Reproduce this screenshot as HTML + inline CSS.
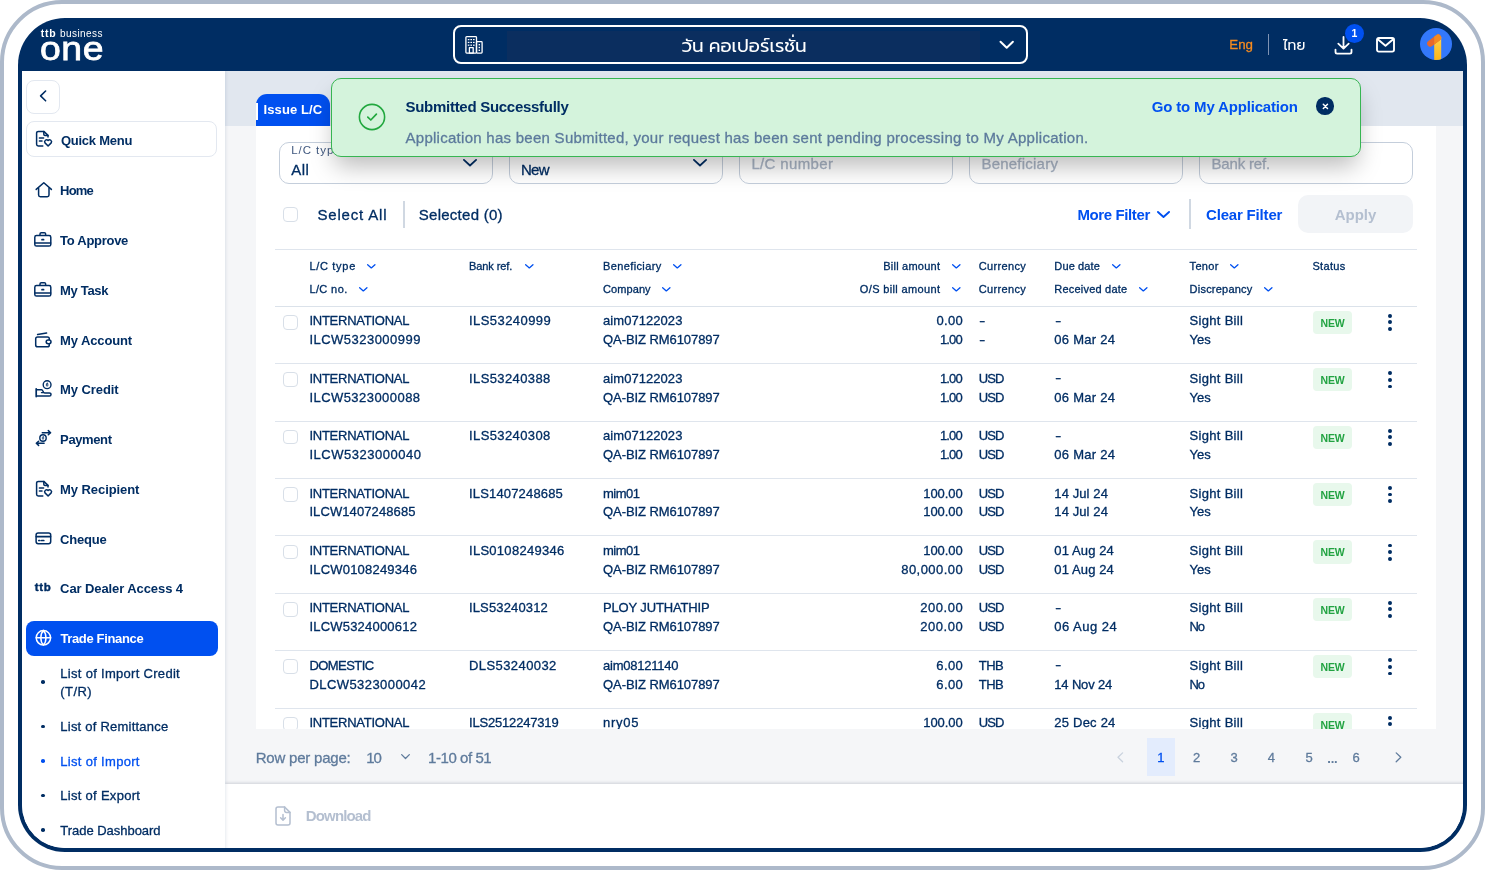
<!DOCTYPE html>
<html lang="en">
<head>
<meta charset="utf-8">
<title>ttb business one - List of Import</title>
<style>
*{box-sizing:border-box;margin:0;padding:0}
html,body{width:1485px;height:870px;overflow:hidden;background:#fff}
body{position:relative;font-family:"Liberation Sans","Noto Sans CJK SC",sans-serif;color:#002d63;-webkit-font-smoothing:antialiased}
.abs{position:absolute}
.outer{position:absolute;left:0;top:0;width:1484.5px;height:869.5px;border:4px solid #adb9ca;border-left-width:4.8px;border-radius:62px}
.frame{position:absolute;left:18px;top:18px;width:1449px;height:834px;background:#002d63;border-radius:47px;overflow:hidden;will-change:transform}
.clip{position:absolute;left:4px;top:53.4px;width:1441px;height:776.6px;background:#f5f6f8;border-radius:0 0 43px 43px;overflow:hidden}
/* page coordinate system inside .clip */
.pg{position:absolute;left:-22px;top:-71.4px;width:1485px;height:870px}
.hd{position:absolute;left:-18px;top:-18px;width:1485px;height:870px;pointer-events:none}
.t{position:absolute;white-space:nowrap;line-height:1}
svg{position:absolute;overflow:visible}
.thai{font-family:"Liberation Sans","Prompt","Kanit","IBM Plex Sans Thai","Noto Sans Thai","Loma","Noto Sans CJK SC",sans-serif}
.rc,.hc,.md{-webkit-text-stroke:0.3px currentColor}
/*SECTION-CSS*/
</style>
</head>
<body>
<div class="outer"></div>
<div class="frame">
  <div class="hd">
<!--HEADER-->
    <!-- logo -->
    <div class="t" style="letter-spacing:0.75px;left:40.7px;top:28.1px;font-size:10.5px;font-weight:700;color:#fff">ttb</div>
    <div class="t" style="letter-spacing:0.42px;left:60.0px;top:28.5px;font-size:10px;color:#fff">business</div>
    <div class="t logo1" style="letter-spacing:0.50px;left:40.0px;top:30.7px;font-size:34px;color:#fff;-webkit-text-stroke:0.8px #fff;transform:scaleX(1.1);transform-origin:0 0">one</div>
    <!-- company selector -->
    <div class="abs" style="left:453px;top:25px;width:575px;height:39px;border:2px solid #fff;border-radius:8px"></div>
    <div class="abs" style="left:507px;top:31px;width:473px;height:30px;background:#0b2e5f"></div>
    <svg style="left:465px;top:36px" width="18" height="18" viewBox="0 0 18 18" fill="none" stroke="#fff" stroke-width="1.3" stroke-linejoin="round">
      <rect x="0.9" y="0.7" width="10.6" height="16.4" rx="0.8"/>
      <rect x="11.5" y="5.6" width="5.6" height="11.5" rx="0.8"/>
      <rect x="4.4" y="11.6" width="3.8" height="5.5"/>
      <g stroke="none" fill="#fff"><rect x="2.8" y="3" width="1.6" height="1.2"/><rect x="5.4" y="3" width="1.6" height="1.2"/><rect x="8" y="3" width="1.6" height="1.2"/>
      <rect x="2.8" y="5.8" width="1.6" height="1.2"/><rect x="5.4" y="5.8" width="1.6" height="1.2"/><rect x="8" y="5.8" width="1.6" height="1.2"/>
      <rect x="2.8" y="8.6" width="1.6" height="1.2"/><rect x="5.4" y="8.6" width="1.6" height="1.2"/><rect x="8" y="8.6" width="1.6" height="1.2"/>
      <rect x="13.6" y="8" width="1.4" height="1.4"/><rect x="13.6" y="10.8" width="1.4" height="1.4"/><rect x="13.6" y="13.6" width="1.4" height="1.4"/></g>
    </svg>
    <div class="t thai" style="left:644px;top:35px;width:200px;text-align:center;font-size:18.4px;line-height:22px;color:#fff">วัน คอเปอร์เรชั่น</div>
    <svg style="left:999px;top:40px" width="16" height="10" viewBox="0 0 16 10" fill="none" stroke="#fff" stroke-width="2" stroke-linecap="round" stroke-linejoin="round"><path d="M1.5 1.8 L7.7 7.8 L13.9 1.8"/></svg>
    <!-- language -->
    <div class="t md" style="left:1229.3px;top:38px;font-size:13.3px;color:#f68b1f">Eng</div>
    <div class="abs" style="left:1267.5px;top:34px;width:1.5px;height:21px;background:#7f93b3"></div>
    <div class="t thai" style="left:1283px;top:35px;font-size:14px;line-height:20px;color:#fff">ไทย</div>
    <!-- download -->
    <svg style="left:1334px;top:36px" width="19" height="19" viewBox="0 0 19 19" fill="none" stroke="#fff" stroke-width="1.8" stroke-linecap="round" stroke-linejoin="round"><path d="M9.5 1 V12.2 M4.3 7.6 L9.5 12.6 L14.7 7.6 M1.5 13.6 V16 a1.6 1.6 0 0 0 1.6 1.6 H15.9 a1.6 1.6 0 0 0 1.6 -1.6 V13.6"/></svg>
    <div class="abs" style="left:1345px;top:24px;width:19px;height:19px;border-radius:50%;background:#0050f0"></div>
    <div class="t" style="left:1345px;top:28.3px;width:19px;text-align:center;font-size:10.5px;font-weight:700;color:#fff">1</div>
    <!-- mail -->
    <svg style="left:1376.2px;top:37px" width="20" height="16" viewBox="0 0 20 16" fill="none" stroke="#fff" stroke-width="1.9" stroke-linecap="round" stroke-linejoin="round"><rect x="1" y="1" width="17" height="13.6" rx="1.8"/><path d="M1.8 2.2 L9.5 8.8 L17.2 2.2"/></svg>
    <!-- avatar -->
    <svg style="left:1419.9px;top:28.3px" width="32" height="32" viewBox="0 0 32 32">
      <defs><linearGradient id="ag" x1="0" y1="0" x2="0" y2="1"><stop offset="0" stop-color="#ffd24f"/><stop offset="1" stop-color="#fdb515"/></linearGradient><clipPath id="ac"><circle cx="16" cy="16" r="16"/></clipPath><clipPath id="ar"><rect x="14.2" y="0" width="20" height="32"/></clipPath></defs>
      <circle cx="16" cy="16" r="16" fill="#3378fb"/>
      <g clip-path="url(#ac)"><rect x="14.2" y="9" width="7" height="24" fill="url(#ag)"/>
      <path d="M10.3 15.6 L18 9.7" stroke="#e8682c" stroke-width="6.3" stroke-linecap="round"/>
      <g clip-path="url(#ar)"><path d="M10.3 15.6 L18 9.7" stroke="#f58a22" stroke-width="6.3" stroke-linecap="round"/></g></g>
    </svg>
<!--/HEADER-->
  </div>
  <div class="clip"><div class="pg">
<!--MAIN-->
<div class="abs" style="left:225px;top:71px;width:1240px;height:54.8px;background:#e1e7ef"></div>
<div class="abs" style="left:256px;top:125.8px;width:1180.4px;height:603.2px;background:#fff"></div>
<div class="abs" style="left:255.8px;top:93.7px;width:74.7px;height:32.3px;background:#0050f0;border-radius:11px 11px 0 0"></div>
<div class="abs" style="left:256px;top:103px;width:1.8px;height:17px;background:#fff"></div>
<div class="t" style="letter-spacing:0.08px;left:263.6px;top:103.0px;font-size:13px;font-weight:700;color:#fff">Issue L/C</div>
<div class="abs" style="left:279px;top:141.6px;width:214px;height:42px;border:1px solid #c4cedb;border-radius:10px;background:#fff"></div>
<div class="abs" style="left:509px;top:141.6px;width:214px;height:42px;border:1px solid #c4cedb;border-radius:10px;background:#fff"></div>
<div class="abs" style="left:739px;top:141.6px;width:214px;height:42px;border:1px solid #c4cedb;border-radius:10px;background:#fff"></div>
<div class="abs" style="left:969px;top:141.6px;width:214px;height:42px;border:1px solid #c4cedb;border-radius:10px;background:#fff"></div>
<div class="abs" style="left:1199px;top:141.6px;width:214px;height:42px;border:1px solid #c4cedb;border-radius:10px;background:#fff"></div>
<div class="t" style="letter-spacing:0.95px;left:291.2px;top:145.1px;font-size:11.5px;color:#40587f">L/C type</div>
<div class="t md" style="letter-spacing:0.41px;left:291.3px;top:162.0px;font-size:15px;color:#002d63">All</div>
<div class="t" style="letter-spacing:0.68px;left:521.2px;top:145.1px;font-size:11.5px;color:#40587f">Status</div>
<div class="t md" style="letter-spacing:-0.75px;left:521.0px;top:162.0px;font-size:15px;color:#002d63">New</div>
<div class="t md" style="letter-spacing:0.36px;left:751.4px;top:155.9px;font-size:15px;color:#aab5c6">L/C number</div>
<div class="t md" style="letter-spacing:0.23px;left:981.4px;top:155.9px;font-size:15px;color:#aab5c6">Beneficiary</div>
<div class="t md" style="letter-spacing:-0.15px;left:1211.4px;top:155.9px;font-size:15px;color:#aab5c6">Bank ref.</div>
<svg style="left:462.6px;top:159.0px" width="14.0" height="7.4" viewBox="0 0 14.0 7.4" fill="none" stroke="#002d63" stroke-width="1.8" stroke-linecap="round" stroke-linejoin="round"><path d="M0.90 0.90 L7.00 6.50 L13.10 0.90"/></svg>
<svg style="left:692.6px;top:159.0px" width="14.0" height="7.4" viewBox="0 0 14.0 7.4" fill="none" stroke="#002d63" stroke-width="1.8" stroke-linecap="round" stroke-linejoin="round"><path d="M0.90 0.90 L7.00 6.50 L13.10 0.90"/></svg>
<div class="abs" style="left:282.7px;top:207.3px;width:15px;height:14.5px;border:1.5px solid #d8dfe8;border-radius:4px;background:#fff"></div>
<div class="t md" style="letter-spacing:0.82px;left:317.4px;top:206.5px;font-size:15px;color:#002d63">Select All</div>
<div class="abs" style="left:403px;top:201px;width:1.5px;height:27px;background:#d0d8e2"></div>
<div class="t md" style="letter-spacing:0.26px;left:418.8px;top:206.5px;font-size:15px;color:#002d63">Selected (0)</div>
<div class="t" style="letter-spacing:-0.38px;left:1077.4px;top:207.1px;font-size:15px;font-weight:700;color:#0050f0">More Filter</div>
<svg style="left:1157.0px;top:211.0px" width="13.0" height="6.9" viewBox="0 0 13.0 6.9" fill="none" stroke="#0050f0" stroke-width="1.9" stroke-linecap="round" stroke-linejoin="round"><path d="M0.95 0.95 L6.50 5.95 L12.05 0.95"/></svg>
<div class="abs" style="left:1189.2px;top:199px;width:1.5px;height:30px;background:#d0d8e2"></div>
<div class="t" style="letter-spacing:-0.18px;left:1206.0px;top:207.1px;font-size:15px;font-weight:700;color:#0050f0">Clear Filter</div>
<div class="abs" style="left:1298.3px;top:195.1px;width:115px;height:38px;border-radius:10px;background:#f2f4f7"></div>
<div class="t" style="letter-spacing:-0.04px;left:1334.8px;top:207.1px;font-size:15px;font-weight:700;color:#b4bfd0">Apply</div>
<div class="abs" style="left:275px;top:248.7px;width:1142px;height:1px;background:#dfe5ed"></div>
<div class="abs" style="left:275px;top:305.8px;width:1142px;height:1px;background:#dbe2ea"></div>
<div class="t hc" style="letter-spacing:0.70px;left:309.4px;top:260.8px;font-size:11px;color:#002d63">L/C type</div>
<svg style="left:366.5px;top:263.6px" width="8.6" height="4.6" viewBox="0 0 8.6 4.6" fill="none" stroke="#0050f0" stroke-width="1.3" stroke-linecap="round" stroke-linejoin="round"><path d="M0.65 0.65 L4.30 3.95 L7.95 0.65"/></svg>
<div class="t hc" style="letter-spacing:0.39px;left:309.4px;top:283.7px;font-size:11px;color:#002d63">L/C no.</div>
<svg style="left:358.9px;top:286.5px" width="8.6" height="4.6" viewBox="0 0 8.6 4.6" fill="none" stroke="#0050f0" stroke-width="1.3" stroke-linecap="round" stroke-linejoin="round"><path d="M0.65 0.65 L4.30 3.95 L7.95 0.65"/></svg>
<div class="t hc" style="letter-spacing:-0.08px;left:469.0px;top:260.8px;font-size:11px;color:#002d63">Bank ref.</div>
<svg style="left:524.5px;top:263.6px" width="8.6" height="4.6" viewBox="0 0 8.6 4.6" fill="none" stroke="#0050f0" stroke-width="1.3" stroke-linecap="round" stroke-linejoin="round"><path d="M0.65 0.65 L4.30 3.95 L7.95 0.65"/></svg>
<div class="t hc" style="letter-spacing:0.38px;left:603.0px;top:260.8px;font-size:11px;color:#002d63">Beneficiary</div>
<svg style="left:673.3px;top:263.6px" width="8.6" height="4.6" viewBox="0 0 8.6 4.6" fill="none" stroke="#0050f0" stroke-width="1.3" stroke-linecap="round" stroke-linejoin="round"><path d="M0.65 0.65 L4.30 3.95 L7.95 0.65"/></svg>
<div class="t hc" style="letter-spacing:0.09px;left:603.0px;top:283.7px;font-size:11px;color:#002d63">Company</div>
<svg style="left:662.2px;top:286.5px" width="8.6" height="4.6" viewBox="0 0 8.6 4.6" fill="none" stroke="#0050f0" stroke-width="1.3" stroke-linecap="round" stroke-linejoin="round"><path d="M0.65 0.65 L4.30 3.95 L7.95 0.65"/></svg>
<div class="t hc" style="letter-spacing:0.23px;right:544.8px;top:260.8px;font-size:11px;color:#002d63">Bill amount</div>
<svg style="left:951.8px;top:263.6px" width="8.6" height="4.6" viewBox="0 0 8.6 4.6" fill="none" stroke="#0050f0" stroke-width="1.3" stroke-linecap="round" stroke-linejoin="round"><path d="M0.65 0.65 L4.30 3.95 L7.95 0.65"/></svg>
<div class="t hc" style="letter-spacing:0.36px;right:544.6px;top:283.7px;font-size:11px;color:#002d63">O/S bill amount</div>
<svg style="left:951.8px;top:286.5px" width="8.6" height="4.6" viewBox="0 0 8.6 4.6" fill="none" stroke="#0050f0" stroke-width="1.3" stroke-linecap="round" stroke-linejoin="round"><path d="M0.65 0.65 L4.30 3.95 L7.95 0.65"/></svg>
<div class="t hc" style="letter-spacing:0.34px;left:978.8px;top:260.8px;font-size:11px;color:#002d63">Currency</div>
<div class="t hc" style="letter-spacing:0.34px;left:978.8px;top:283.7px;font-size:11px;color:#002d63">Currency</div>
<div class="t hc" style="letter-spacing:0.14px;left:1054.3px;top:260.8px;font-size:11px;color:#002d63">Due date</div>
<svg style="left:1112.2px;top:263.6px" width="8.6" height="4.6" viewBox="0 0 8.6 4.6" fill="none" stroke="#0050f0" stroke-width="1.3" stroke-linecap="round" stroke-linejoin="round"><path d="M0.65 0.65 L4.30 3.95 L7.95 0.65"/></svg>
<div class="t hc" style="letter-spacing:0.21px;left:1054.3px;top:283.7px;font-size:11px;color:#002d63">Received date</div>
<svg style="left:1138.6px;top:286.5px" width="8.6" height="4.6" viewBox="0 0 8.6 4.6" fill="none" stroke="#0050f0" stroke-width="1.3" stroke-linecap="round" stroke-linejoin="round"><path d="M0.65 0.65 L4.30 3.95 L7.95 0.65"/></svg>
<div class="t hc" style="letter-spacing:0.30px;left:1189.6px;top:260.8px;font-size:11px;color:#002d63">Tenor</div>
<svg style="left:1229.6px;top:263.6px" width="8.6" height="4.6" viewBox="0 0 8.6 4.6" fill="none" stroke="#0050f0" stroke-width="1.3" stroke-linecap="round" stroke-linejoin="round"><path d="M0.65 0.65 L4.30 3.95 L7.95 0.65"/></svg>
<div class="t hc" style="letter-spacing:0.22px;left:1189.6px;top:283.7px;font-size:11px;color:#002d63">Discrepancy</div>
<svg style="left:1264.2px;top:286.5px" width="8.6" height="4.6" viewBox="0 0 8.6 4.6" fill="none" stroke="#0050f0" stroke-width="1.3" stroke-linecap="round" stroke-linejoin="round"><path d="M0.65 0.65 L4.30 3.95 L7.95 0.65"/></svg>
<div class="t hc" style="letter-spacing:0.34px;left:1312.4px;top:260.8px;font-size:11px;color:#002d63">Status</div>
<div class="abs" style="left:282.7px;top:315.0px;width:15px;height:14.5px;border:1.5px solid #d8dfe8;border-radius:4px;background:#fff"></div>
<div class="t rc" style="letter-spacing:-0.25px;left:309.4px;top:314.3px;font-size:13px">INTERNATIONAL</div>
<div class="t rc" style="letter-spacing:0.48px;left:309.4px;top:333.1px;font-size:13px">ILCW5323000999</div>
<div class="t rc" style="letter-spacing:0.44px;left:469.0px;top:314.3px;font-size:13px">ILS53240999</div>
<div class="t rc" style="letter-spacing:0.06px;left:603.0px;top:314.3px;font-size:13px">aim07122023</div>
<div class="t rc" style="letter-spacing:-0.07px;left:603.0px;top:333.1px;font-size:13px">QA-BIZ RM6107897</div>
<div class="t rc" style="letter-spacing:0.33px;right:522.0px;top:314.3px;font-size:13px">0.00</div>
<div class="t rc" style="letter-spacing:-0.87px;right:523.2px;top:333.1px;font-size:13px">1.00</div>
<div class="t rc" style="left:979.0px;top:313.9px;font-size:13px;transform:scaleX(1.5);transform-origin:0 50%;-webkit-text-stroke:0.1px currentColor">-</div>
<div class="t rc" style="left:979.0px;top:332.7px;font-size:13px;transform:scaleX(1.5);transform-origin:0 50%;-webkit-text-stroke:0.1px currentColor">-</div>
<div class="t rc" style="left:1054.5px;top:313.9px;font-size:13px;transform:scaleX(1.5);transform-origin:0 50%;-webkit-text-stroke:0.1px currentColor">-</div>
<div class="t rc" style="letter-spacing:0.27px;left:1054.3px;top:333.1px;font-size:13px">06 Mar 24</div>
<div class="t rc" style="letter-spacing:0.30px;left:1189.6px;top:314.3px;font-size:13px">Sight Bill</div>
<div class="t rc" style="letter-spacing:-0.05px;left:1189.6px;top:333.1px;font-size:13px">Yes</div>
<div class="abs" style="left:1313px;top:310.8px;width:39.2px;height:23.2px;border-radius:4px;background:#e8f8ec"></div>
<div class="t nw" style="letter-spacing:-0.10px;left:1182.6px;width:300px;text-align:center;top:317.8px;font-size:10.5px;font-weight:700;color:#22a342">NEW</div>
<div class="abs" style="left:1388.3px;top:313.9px;width:3.9px;height:3.9px;border-radius:50%;background:#002d63"></div>
<div class="abs" style="left:1388.3px;top:320.4px;width:3.9px;height:3.9px;border-radius:50%;background:#002d63"></div>
<div class="abs" style="left:1388.3px;top:327.1px;width:3.9px;height:3.9px;border-radius:50%;background:#002d63"></div>
<div class="abs" style="left:275px;top:363.2px;width:1142px;height:1px;background:#dfe5ed"></div>
<div class="abs" style="left:282.7px;top:372.4px;width:15px;height:14.5px;border:1.5px solid #d8dfe8;border-radius:4px;background:#fff"></div>
<div class="t rc" style="letter-spacing:-0.25px;left:309.4px;top:371.7px;font-size:13px">INTERNATIONAL</div>
<div class="t rc" style="letter-spacing:0.45px;left:309.4px;top:390.5px;font-size:13px">ILCW5323000088</div>
<div class="t rc" style="letter-spacing:0.40px;left:469.0px;top:371.7px;font-size:13px">ILS53240388</div>
<div class="t rc" style="letter-spacing:0.06px;left:603.0px;top:371.7px;font-size:13px">aim07122023</div>
<div class="t rc" style="letter-spacing:-0.07px;left:603.0px;top:390.5px;font-size:13px">QA-BIZ RM6107897</div>
<div class="t rc" style="letter-spacing:-0.87px;right:523.2px;top:371.7px;font-size:13px">1.00</div>
<div class="t rc" style="letter-spacing:-0.87px;right:523.2px;top:390.5px;font-size:13px">1.00</div>
<div class="t rc" style="letter-spacing:-0.97px;left:978.8px;top:371.7px;font-size:13px">USD</div>
<div class="t rc" style="letter-spacing:-0.97px;left:978.8px;top:390.5px;font-size:13px">USD</div>
<div class="t rc" style="left:1054.5px;top:371.3px;font-size:13px;transform:scaleX(1.5);transform-origin:0 50%;-webkit-text-stroke:0.1px currentColor">-</div>
<div class="t rc" style="letter-spacing:0.27px;left:1054.3px;top:390.5px;font-size:13px">06 Mar 24</div>
<div class="t rc" style="letter-spacing:0.30px;left:1189.6px;top:371.7px;font-size:13px">Sight Bill</div>
<div class="t rc" style="letter-spacing:-0.05px;left:1189.6px;top:390.5px;font-size:13px">Yes</div>
<div class="abs" style="left:1313px;top:368.2px;width:39.2px;height:23.2px;border-radius:4px;background:#e8f8ec"></div>
<div class="t nw" style="letter-spacing:-0.10px;left:1182.6px;width:300px;text-align:center;top:375.2px;font-size:10.5px;font-weight:700;color:#22a342">NEW</div>
<div class="abs" style="left:1388.3px;top:371.3px;width:3.9px;height:3.9px;border-radius:50%;background:#002d63"></div>
<div class="abs" style="left:1388.3px;top:377.8px;width:3.9px;height:3.9px;border-radius:50%;background:#002d63"></div>
<div class="abs" style="left:1388.3px;top:384.5px;width:3.9px;height:3.9px;border-radius:50%;background:#002d63"></div>
<div class="abs" style="left:275px;top:420.6px;width:1142px;height:1px;background:#dfe5ed"></div>
<div class="abs" style="left:282.7px;top:429.8px;width:15px;height:14.5px;border:1.5px solid #d8dfe8;border-radius:4px;background:#fff"></div>
<div class="t rc" style="letter-spacing:-0.25px;left:309.4px;top:429.1px;font-size:13px">INTERNATIONAL</div>
<div class="t rc" style="letter-spacing:0.53px;left:309.4px;top:447.9px;font-size:13px">ILCW5323000040</div>
<div class="t rc" style="letter-spacing:0.40px;left:469.0px;top:429.1px;font-size:13px">ILS53240308</div>
<div class="t rc" style="letter-spacing:0.06px;left:603.0px;top:429.1px;font-size:13px">aim07122023</div>
<div class="t rc" style="letter-spacing:-0.07px;left:603.0px;top:447.9px;font-size:13px">QA-BIZ RM6107897</div>
<div class="t rc" style="letter-spacing:-0.87px;right:523.2px;top:429.1px;font-size:13px">1.00</div>
<div class="t rc" style="letter-spacing:-0.87px;right:523.2px;top:447.9px;font-size:13px">1.00</div>
<div class="t rc" style="letter-spacing:-0.97px;left:978.8px;top:429.1px;font-size:13px">USD</div>
<div class="t rc" style="letter-spacing:-0.97px;left:978.8px;top:447.9px;font-size:13px">USD</div>
<div class="t rc" style="left:1054.5px;top:428.7px;font-size:13px;transform:scaleX(1.5);transform-origin:0 50%;-webkit-text-stroke:0.1px currentColor">-</div>
<div class="t rc" style="letter-spacing:0.27px;left:1054.3px;top:447.9px;font-size:13px">06 Mar 24</div>
<div class="t rc" style="letter-spacing:0.30px;left:1189.6px;top:429.1px;font-size:13px">Sight Bill</div>
<div class="t rc" style="letter-spacing:-0.05px;left:1189.6px;top:447.9px;font-size:13px">Yes</div>
<div class="abs" style="left:1313px;top:425.6px;width:39.2px;height:23.2px;border-radius:4px;background:#e8f8ec"></div>
<div class="t nw" style="letter-spacing:-0.10px;left:1182.6px;width:300px;text-align:center;top:432.6px;font-size:10.5px;font-weight:700;color:#22a342">NEW</div>
<div class="abs" style="left:1388.3px;top:428.8px;width:3.9px;height:3.9px;border-radius:50%;background:#002d63"></div>
<div class="abs" style="left:1388.3px;top:435.2px;width:3.9px;height:3.9px;border-radius:50%;background:#002d63"></div>
<div class="abs" style="left:1388.3px;top:441.9px;width:3.9px;height:3.9px;border-radius:50%;background:#002d63"></div>
<div class="abs" style="left:275px;top:478.0px;width:1142px;height:1px;background:#dfe5ed"></div>
<div class="abs" style="left:282.7px;top:487.2px;width:15px;height:14.5px;border:1.5px solid #d8dfe8;border-radius:4px;background:#fff"></div>
<div class="t rc" style="letter-spacing:-0.25px;left:309.4px;top:486.5px;font-size:13px">INTERNATIONAL</div>
<div class="t rc" style="letter-spacing:0.10px;left:309.4px;top:505.3px;font-size:13px">ILCW1407248685</div>
<div class="t rc" style="letter-spacing:0.17px;left:469.0px;top:486.5px;font-size:13px">ILS1407248685</div>
<div class="t rc" style="letter-spacing:-0.50px;left:603.0px;top:486.5px;font-size:13px">mim01</div>
<div class="t rc" style="letter-spacing:-0.07px;left:603.0px;top:505.3px;font-size:13px">QA-BIZ RM6107897</div>
<div class="t rc" style="letter-spacing:-0.07px;right:522.4px;top:486.5px;font-size:13px">100.00</div>
<div class="t rc" style="letter-spacing:-0.07px;right:522.4px;top:505.3px;font-size:13px">100.00</div>
<div class="t rc" style="letter-spacing:-0.97px;left:978.8px;top:486.5px;font-size:13px">USD</div>
<div class="t rc" style="letter-spacing:-0.97px;left:978.8px;top:505.3px;font-size:13px">USD</div>
<div class="t rc" style="letter-spacing:0.10px;left:1054.3px;top:486.5px;font-size:13px">14 Jul 24</div>
<div class="t rc" style="letter-spacing:0.10px;left:1054.3px;top:505.3px;font-size:13px">14 Jul 24</div>
<div class="t rc" style="letter-spacing:0.30px;left:1189.6px;top:486.5px;font-size:13px">Sight Bill</div>
<div class="t rc" style="letter-spacing:-0.05px;left:1189.6px;top:505.3px;font-size:13px">Yes</div>
<div class="abs" style="left:1313px;top:483.0px;width:39.2px;height:23.2px;border-radius:4px;background:#e8f8ec"></div>
<div class="t nw" style="letter-spacing:-0.10px;left:1182.6px;width:300px;text-align:center;top:490.0px;font-size:10.5px;font-weight:700;color:#22a342">NEW</div>
<div class="abs" style="left:1388.3px;top:486.1px;width:3.9px;height:3.9px;border-radius:50%;background:#002d63"></div>
<div class="abs" style="left:1388.3px;top:492.6px;width:3.9px;height:3.9px;border-radius:50%;background:#002d63"></div>
<div class="abs" style="left:1388.3px;top:499.3px;width:3.9px;height:3.9px;border-radius:50%;background:#002d63"></div>
<div class="abs" style="left:275px;top:535.4px;width:1142px;height:1px;background:#dfe5ed"></div>
<div class="abs" style="left:282.7px;top:544.6px;width:15px;height:14.5px;border:1.5px solid #d8dfe8;border-radius:4px;background:#fff"></div>
<div class="t rc" style="letter-spacing:-0.25px;left:309.4px;top:543.9px;font-size:13px">INTERNATIONAL</div>
<div class="t rc" style="letter-spacing:0.21px;left:309.4px;top:562.7px;font-size:13px">ILCW0108249346</div>
<div class="t rc" style="letter-spacing:0.28px;left:469.0px;top:543.9px;font-size:13px">ILS0108249346</div>
<div class="t rc" style="letter-spacing:-0.50px;left:603.0px;top:543.9px;font-size:13px">mim01</div>
<div class="t rc" style="letter-spacing:-0.07px;left:603.0px;top:562.7px;font-size:13px">QA-BIZ RM6107897</div>
<div class="t rc" style="letter-spacing:-0.07px;right:522.4px;top:543.9px;font-size:13px">100.00</div>
<div class="t rc" style="letter-spacing:0.46px;right:521.8px;top:562.7px;font-size:13px">80,000.00</div>
<div class="t rc" style="letter-spacing:-0.97px;left:978.8px;top:543.9px;font-size:13px">USD</div>
<div class="t rc" style="letter-spacing:-0.97px;left:978.8px;top:562.7px;font-size:13px">USD</div>
<div class="t rc" style="letter-spacing:0.12px;left:1054.3px;top:543.9px;font-size:13px">01 Aug 24</div>
<div class="t rc" style="letter-spacing:0.12px;left:1054.3px;top:562.7px;font-size:13px">01 Aug 24</div>
<div class="t rc" style="letter-spacing:0.30px;left:1189.6px;top:543.9px;font-size:13px">Sight Bill</div>
<div class="t rc" style="letter-spacing:-0.05px;left:1189.6px;top:562.7px;font-size:13px">Yes</div>
<div class="abs" style="left:1313px;top:540.4px;width:39.2px;height:23.2px;border-radius:4px;background:#e8f8ec"></div>
<div class="t nw" style="letter-spacing:-0.10px;left:1182.6px;width:300px;text-align:center;top:547.4px;font-size:10.5px;font-weight:700;color:#22a342">NEW</div>
<div class="abs" style="left:1388.3px;top:543.5px;width:3.9px;height:3.9px;border-radius:50%;background:#002d63"></div>
<div class="abs" style="left:1388.3px;top:550.0px;width:3.9px;height:3.9px;border-radius:50%;background:#002d63"></div>
<div class="abs" style="left:1388.3px;top:556.8px;width:3.9px;height:3.9px;border-radius:50%;background:#002d63"></div>
<div class="abs" style="left:275px;top:592.8px;width:1142px;height:1px;background:#dfe5ed"></div>
<div class="abs" style="left:282.7px;top:602.0px;width:15px;height:14.5px;border:1.5px solid #d8dfe8;border-radius:4px;background:#fff"></div>
<div class="t rc" style="letter-spacing:-0.25px;left:309.4px;top:601.3px;font-size:13px">INTERNATIONAL</div>
<div class="t rc" style="letter-spacing:0.21px;left:309.4px;top:620.1px;font-size:13px">ILCW5324000612</div>
<div class="t rc" style="letter-spacing:0.14px;left:469.0px;top:601.3px;font-size:13px">ILS53240312</div>
<div class="t rc" style="letter-spacing:-0.15px;left:603.0px;top:601.3px;font-size:13px">PLOY JUTHATHIP</div>
<div class="t rc" style="letter-spacing:-0.07px;left:603.0px;top:620.1px;font-size:13px">QA-BIZ RM6107897</div>
<div class="t rc" style="letter-spacing:0.53px;right:521.8px;top:601.3px;font-size:13px">200.00</div>
<div class="t rc" style="letter-spacing:0.53px;right:521.8px;top:620.1px;font-size:13px">200.00</div>
<div class="t rc" style="letter-spacing:-0.97px;left:978.8px;top:601.3px;font-size:13px">USD</div>
<div class="t rc" style="letter-spacing:-0.97px;left:978.8px;top:620.1px;font-size:13px">USD</div>
<div class="t rc" style="left:1054.5px;top:600.9px;font-size:13px;transform:scaleX(1.5);transform-origin:0 50%;-webkit-text-stroke:0.1px currentColor">-</div>
<div class="t rc" style="letter-spacing:0.48px;left:1054.3px;top:620.1px;font-size:13px">06 Aug 24</div>
<div class="t rc" style="letter-spacing:0.30px;left:1189.6px;top:601.3px;font-size:13px">Sight Bill</div>
<div class="t rc" style="letter-spacing:-1.12px;left:1189.6px;top:620.1px;font-size:13px">No</div>
<div class="abs" style="left:1313px;top:597.8px;width:39.2px;height:23.2px;border-radius:4px;background:#e8f8ec"></div>
<div class="t nw" style="letter-spacing:-0.10px;left:1182.6px;width:300px;text-align:center;top:604.8px;font-size:10.5px;font-weight:700;color:#22a342">NEW</div>
<div class="abs" style="left:1388.3px;top:600.9px;width:3.9px;height:3.9px;border-radius:50%;background:#002d63"></div>
<div class="abs" style="left:1388.3px;top:607.4px;width:3.9px;height:3.9px;border-radius:50%;background:#002d63"></div>
<div class="abs" style="left:1388.3px;top:614.1px;width:3.9px;height:3.9px;border-radius:50%;background:#002d63"></div>
<div class="abs" style="left:275px;top:650.2px;width:1142px;height:1px;background:#dfe5ed"></div>
<div class="abs" style="left:282.7px;top:659.4px;width:15px;height:14.5px;border:1.5px solid #d8dfe8;border-radius:4px;background:#fff"></div>
<div class="t rc" style="letter-spacing:-0.54px;left:309.4px;top:658.7px;font-size:13px">DOMESTIC</div>
<div class="t rc" style="letter-spacing:0.44px;left:309.4px;top:677.5px;font-size:13px">DLCW5323000042</div>
<div class="t rc" style="letter-spacing:0.42px;left:469.0px;top:658.7px;font-size:13px">DLS53240032</div>
<div class="t rc" style="letter-spacing:-0.23px;left:603.0px;top:658.7px;font-size:13px">aim08121140</div>
<div class="t rc" style="letter-spacing:-0.07px;left:603.0px;top:677.5px;font-size:13px">QA-BIZ RM6107897</div>
<div class="t rc" style="letter-spacing:0.37px;right:521.9px;top:658.7px;font-size:13px">6.00</div>
<div class="t rc" style="letter-spacing:0.37px;right:521.9px;top:677.5px;font-size:13px">6.00</div>
<div class="t rc" style="letter-spacing:-0.60px;left:978.8px;top:658.7px;font-size:13px">THB</div>
<div class="t rc" style="letter-spacing:-0.60px;left:978.8px;top:677.5px;font-size:13px">THB</div>
<div class="t rc" style="left:1054.5px;top:658.3px;font-size:13px;transform:scaleX(1.5);transform-origin:0 50%;-webkit-text-stroke:0.1px currentColor">-</div>
<div class="t rc" style="letter-spacing:-0.16px;left:1054.3px;top:677.5px;font-size:13px">14 Nov 24</div>
<div class="t rc" style="letter-spacing:0.30px;left:1189.6px;top:658.7px;font-size:13px">Sight Bill</div>
<div class="t rc" style="letter-spacing:-1.12px;left:1189.6px;top:677.5px;font-size:13px">No</div>
<div class="abs" style="left:1313px;top:655.2px;width:39.2px;height:23.2px;border-radius:4px;background:#e8f8ec"></div>
<div class="t nw" style="letter-spacing:-0.10px;left:1182.6px;width:300px;text-align:center;top:662.2px;font-size:10.5px;font-weight:700;color:#22a342">NEW</div>
<div class="abs" style="left:1388.3px;top:658.3px;width:3.9px;height:3.9px;border-radius:50%;background:#002d63"></div>
<div class="abs" style="left:1388.3px;top:664.8px;width:3.9px;height:3.9px;border-radius:50%;background:#002d63"></div>
<div class="abs" style="left:1388.3px;top:671.5px;width:3.9px;height:3.9px;border-radius:50%;background:#002d63"></div>
<div class="abs" style="left:275px;top:707.6px;width:1142px;height:1px;background:#dfe5ed"></div>
<div class="abs" style="left:282.7px;top:716.8px;width:15px;height:14.5px;border:1.5px solid #d8dfe8;border-radius:4px;background:#fff"></div>
<div class="t rc" style="letter-spacing:-0.25px;left:309.4px;top:716.1px;font-size:13px">INTERNATIONAL</div>
<div class="t rc" style="letter-spacing:-0.18px;left:469.0px;top:716.1px;font-size:13px">ILS2512247319</div>
<div class="t rc" style="letter-spacing:0.75px;left:603.0px;top:716.1px;font-size:13px">nry05</div>
<div class="t rc" style="letter-spacing:-0.07px;right:522.4px;top:716.1px;font-size:13px">100.00</div>
<div class="t rc" style="letter-spacing:-0.97px;left:978.8px;top:716.1px;font-size:13px">USD</div>
<div class="t rc" style="letter-spacing:0.22px;left:1054.3px;top:716.1px;font-size:13px">25 Dec 24</div>
<div class="t rc" style="letter-spacing:0.30px;left:1189.6px;top:716.1px;font-size:13px">Sight Bill</div>
<div class="abs" style="left:1313px;top:712.6px;width:39.2px;height:23.2px;border-radius:4px;background:#e8f8ec"></div>
<div class="t nw" style="letter-spacing:-0.10px;left:1182.6px;width:300px;text-align:center;top:719.6px;font-size:10.5px;font-weight:700;color:#22a342">NEW</div>
<div class="abs" style="left:1388.3px;top:715.8px;width:3.9px;height:3.9px;border-radius:50%;background:#002d63"></div>
<div class="abs" style="left:1388.3px;top:722.2px;width:3.9px;height:3.9px;border-radius:50%;background:#002d63"></div>
<div class="abs" style="left:1388.3px;top:729.0px;width:3.9px;height:3.9px;border-radius:50%;background:#002d63"></div>
<div class="abs" style="left:225px;top:729px;width:1240px;height:55px;background:#f5f6f8"></div>
<div class="t md" style="letter-spacing:-0.21px;left:255.7px;top:750.3px;font-size:15px;color:#5f7b9c">Row per page:</div>
<div class="t md" style="letter-spacing:-1.10px;left:366.2px;top:750.3px;font-size:15px;color:#5f7b9c">10</div>
<svg style="left:400.8px;top:754.4px" width="9.0" height="5.2" viewBox="0 0 9.0 5.2" fill="none" stroke="#5f7b9c" stroke-width="1.3" stroke-linecap="round" stroke-linejoin="round"><path d="M0.65 0.65 L4.50 4.55 L8.35 0.65"/></svg>
<div class="t md" style="letter-spacing:-0.43px;left:428.0px;top:750.3px;font-size:15px;color:#5f7b9c">1-10 of 51</div>
<div class="abs" style="left:1146.8px;top:737.9px;width:28.2px;height:38.2px;background:#e3ecfd"></div>
<div class="t md" style="left:1010.9px;width:300px;text-align:center;top:751.2px;font-size:13px;color:#0050f0">1</div>
<div class="t md" style="left:1046.7px;width:300px;text-align:center;top:751.2px;font-size:13px;color:#5f7b9c">2</div>
<div class="t md" style="left:1084.0px;width:300px;text-align:center;top:751.2px;font-size:13px;color:#5f7b9c">3</div>
<div class="t md" style="left:1121.4px;width:300px;text-align:center;top:751.2px;font-size:13px;color:#5f7b9c">4</div>
<div class="t md" style="left:1159.0px;width:300px;text-align:center;top:751.2px;font-size:13px;color:#5f7b9c">5</div>
<div class="t md" style="left:1206.0px;width:300px;text-align:center;top:751.2px;font-size:13px;color:#5f7b9c">6</div>
<div class="t" style="letter-spacing:-0.30px;left:1182.3px;width:300px;text-align:center;top:752.3px;font-size:13px;font-weight:700;color:#5f7b9c">...</div>
<svg style="left:1116.8px;top:752.3px" width="7" height="11" viewBox="0 0 7 11" fill="none" stroke="#c9d2de" stroke-width="1.3" stroke-linecap="round" stroke-linejoin="round"><path d="M5.6 0.9 L1 5.3 L5.6 9.7"/></svg>
<svg style="left:1394.6px;top:752.3px" width="7" height="11" viewBox="0 0 7 11" fill="none" stroke="#5f7b9c" stroke-width="1.3" stroke-linecap="round" stroke-linejoin="round"><path d="M1.2 0.9 L5.8 5.3 L1.2 9.7"/></svg>
<div class="abs" style="left:225px;top:784px;width:1240px;height:70px;background:#fff;box-shadow:0 -1px 3px rgba(0,20,50,0.17)"></div>
<svg style="left:274.5px;top:805.5px" width="16" height="20" viewBox="0 0 16 20" fill="none" stroke="#b4bfd0" stroke-width="1.5" stroke-linecap="round" stroke-linejoin="round"><path d="M9.6 1 H3 a2 2 0 0 0 -2 2 V17 a2 2 0 0 0 2 2 H13 a2 2 0 0 0 2 -2 V6.4 Z"/><path d="M9.6 1 V4.6 a1.8 1.8 0 0 0 1.8 1.8 H15"/><path d="M8 8.6 V14 M5.6 11.8 L8 14.2 L10.4 11.8"/></svg>
<div class="t" style="letter-spacing:-0.85px;left:305.8px;top:807.9px;font-size:15px;font-weight:700;color:#b4bfd0">Download</div>
<!--/MAIN-->
<!--SIDEBAR-->
<div class="abs" style="left:22px;top:71px;width:203px;height:780px;background:#fff;box-shadow:1px 0 3px rgba(0,45,99,0.10)"></div>
<div class="abs" style="left:26px;top:79.5px;width:34px;height:34px;border:1px solid #e3e8f0;border-radius:8px;background:#fff"></div>
<svg style="left:38px;top:90px" width="9" height="13" viewBox="0 0 9 13" fill="none" stroke="#002d63" stroke-width="1.6" stroke-linecap="round" stroke-linejoin="round"><path d="M7.6 1 L2.6 5.9 L7.6 10.8"/></svg>
<div class="abs" style="left:26px;top:121px;width:191px;height:36.3px;border:1px solid #e3e8f0;border-radius:8px;background:#fff"></div>
<div class="abs" style="left:26px;top:621px;width:191.5px;height:35px;border-radius:8px;background:#0050f0"></div>
<svg style="left:35px;top:130.4px" width="18" height="18" viewBox="0 0 18 18" fill="none" stroke="#002d63" stroke-width="1.5" stroke-linecap="round" stroke-linejoin="round" stroke-width="1.7"><path d="M7.8 16 H3.3 a1.7 1.7 0 0 1 -1.7 -1.7 V3.1 a1.7 1.7 0 0 1 1.7 -1.7 H8.8 L13 5.4 V7"/><path d="M8.8 1.4 V4.2 a1.2 1.2 0 0 0 1.2 1.2 H13"/><path d="M4.4 8 H8.6 M4.4 11 H7"/><path d="M13.1 16 L10 12.9 a2 2 0 0 1 3.1 -2.5 a2 2 0 0 1 3.1 2.5 Z"/></svg>
<div class="t" style="letter-spacing:-0.23px;left:60.9px;top:133.7px;font-size:13px;font-weight:700;color:#002d63">Quick Menu</div>
<svg style="left:34.5px;top:180.5px" width="18" height="18" viewBox="0 0 18 18" fill="none" stroke="#002d63" stroke-width="1.5" stroke-linecap="round" stroke-linejoin="round"><path d="M1.2 8.4 L8.8 1.7 L16.4 8.4"/><path d="M3.6 7.2 V14 a1.7 1.7 0 0 0 1.7 1.7 H12.3 a1.7 1.7 0 0 0 1.7 -1.7 V7.2"/></svg>
<div class="t" style="letter-spacing:-0.84px;left:60.1px;top:183.5px;font-size:13px;font-weight:700;color:#002d63">Home</div>
<svg style="left:34px;top:230.8px" width="19" height="18" viewBox="0 0 19 18" fill="none" stroke="#002d63" stroke-width="1.5" stroke-linecap="round" stroke-linejoin="round"><rect x="0.8" y="4.5" width="16" height="10.6" rx="1.7"/><path d="M6 4.3 V3 a1.3 1.3 0 0 1 1.3 -1.3 H10.3 a1.3 1.3 0 0 1 1.3 1.3 V4.3"/><path d="M1 11.9 H16.6"/><path d="M8 8.7 H9.6" stroke-width="1.7"/></svg>
<div class="t" style="letter-spacing:-0.28px;left:60.1px;top:233.5px;font-size:13px;font-weight:700;color:#002d63">To Approve</div>
<svg style="left:34px;top:281.3px" width="19" height="18" viewBox="0 0 19 18" fill="none" stroke="#002d63" stroke-width="1.5" stroke-linecap="round" stroke-linejoin="round"><rect x="0.8" y="4.5" width="16" height="10.6" rx="1.7"/><path d="M6 4.3 V3 a1.3 1.3 0 0 1 1.3 -1.3 H10.3 a1.3 1.3 0 0 1 1.3 1.3 V4.3"/><path d="M1 11.9 H16.6"/><path d="M8 8.7 H9.6" stroke-width="1.7"/></svg>
<div class="t" style="letter-spacing:-0.34px;left:60.1px;top:284.0px;font-size:13px;font-weight:700;color:#002d63">My Task</div>
<svg style="left:35px;top:330.9px" width="18" height="18" viewBox="0 0 18 18" fill="none" stroke="#002d63" stroke-width="1.5" stroke-linecap="round" stroke-linejoin="round"><path d="M2.6 3.6 L11.6 2.1"/><rect x="0.7" y="5.9" width="13.6" height="9.9" rx="1.9"/><rect x="11.2" y="9" width="4.8" height="3.7" rx="1.85" fill="#fff"/></svg>
<div class="t" style="letter-spacing:-0.12px;left:60.1px;top:333.6px;font-size:13px;font-weight:700;color:#002d63">My Account</div>
<svg style="left:34.5px;top:380.4px" width="18" height="18" viewBox="0 0 18 18" fill="none" stroke="#002d63" stroke-width="1.5" stroke-linecap="round" stroke-linejoin="round"><circle cx="12.1" cy="4.7" r="3.9" stroke-width="1.4"/><rect x="11.4" y="3.2" width="1.4" height="3" rx="0.7" stroke-width="0.9"/><path d="M1.2 8.8 V16.6" stroke-width="1.7"/><path d="M2 9.8 H6.6 C8 9.8 8 12.9 9.6 12.9 H14.4 a1.6 1.6 0 0 1 0 3.2 H2"/><path d="M6.4 12.6 H8.6" stroke-width="1.2"/></svg>
<div class="t" style="letter-spacing:-0.08px;left:60.1px;top:383.1px;font-size:13px;font-weight:700;color:#002d63">My Credit</div>
<svg style="left:34.5px;top:430.3px" width="18" height="18" viewBox="0 0 18 18" fill="none" stroke="#002d63" stroke-width="1.5" stroke-linecap="round" stroke-linejoin="round"><circle cx="8" cy="8" r="3.2" stroke-width="1.4"/><rect x="7.4" y="6.7" width="1.2" height="2.6" rx="0.6" stroke-width="0.8"/><path d="M7.3 2.7 H15.3 M13.3 0.6 L15.6 2.7 L13.3 4.8"/><path d="M9.1 13.3 H1.6 M3.6 11.2 L1.3 13.3 L3.6 15.4"/></svg>
<div class="t" style="letter-spacing:-0.38px;left:60.1px;top:433.0px;font-size:13px;font-weight:700;color:#002d63">Payment</div>
<svg style="left:35px;top:479.5px" width="18" height="18" viewBox="0 0 18 18" fill="none" stroke="#002d63" stroke-width="1.5" stroke-linecap="round" stroke-linejoin="round" stroke-width="1.7"><path d="M7.8 16 H3.3 a1.7 1.7 0 0 1 -1.7 -1.7 V3.1 a1.7 1.7 0 0 1 1.7 -1.7 H8.8 L13 5.4 V7"/><path d="M8.8 1.4 V4.2 a1.2 1.2 0 0 0 1.2 1.2 H13"/><path d="M4.4 8 H8.6 M4.4 11 H7"/><path d="M13.1 16 L10 12.9 a2 2 0 0 1 3.1 -2.5 a2 2 0 0 1 3.1 2.5 Z"/></svg>
<div class="t" style="letter-spacing:-0.08px;left:60.1px;top:482.8px;font-size:13px;font-weight:700;color:#002d63">My Recipient</div>
<svg style="left:34.5px;top:529.8px" width="18" height="18" viewBox="0 0 18 18" fill="none" stroke="#002d63" stroke-width="1.5" stroke-linecap="round" stroke-linejoin="round"><rect x="1.1" y="3" width="14.6" height="10.7" rx="2.1"/><path d="M1.3 6.6 H15.5" stroke-width="1.7"/><path d="M3.8 10.5 H4.8 M6.6 10.5 H8.8" stroke-width="1.7"/></svg>
<div class="t" style="letter-spacing:-0.23px;left:60.1px;top:532.5px;font-size:13px;font-weight:700;color:#002d63">Cheque</div>
<div class="t" style="letter-spacing:0.76px;left:34.7px;top:582.2px;font-size:11.5px;font-weight:700;color:#002d63;-webkit-text-stroke:0.4px currentColor">ttb</div>
<div class="t" style="letter-spacing:-0.09px;left:60.1px;top:582.2px;font-size:13px;font-weight:700;color:#002d63">Car Dealer Access 4</div>
<svg style="left:34.5px;top:629.3px" width="18" height="18" viewBox="0 0 18 18" fill="none" stroke="#fff" stroke-width="1.5" stroke-linecap="round" stroke-linejoin="round"><circle cx="8.4" cy="8.8" r="7.2"/><path d="M1.2 8.8 H15.6"/><path d="M8.4 1.6 C5 4.6 5 13 8.4 16 C11.8 13 11.8 4.6 8.4 1.6"/></svg>
<div class="t" style="letter-spacing:-0.35px;left:60.4px;top:632.0px;font-size:13px;font-weight:700;color:#fff">Trade Finance</div>
<div class="t md" style="letter-spacing:0.30px;left:60.3px;top:666.8px;font-size:13px;color:#002d63">List of Import Credit</div>
<div class="abs" style="left:41.2px;top:680.2px;width:3.6px;height:3.6px;border-radius:50%;background:#002d63"></div>
<div class="t md" style="letter-spacing:0.45px;left:60.3px;top:684.9px;font-size:13px;color:#002d63">(T/R)</div>
<div class="t md" style="letter-spacing:0.23px;left:60.3px;top:720.4px;font-size:13px;color:#002d63">List of Remittance</div>
<div class="abs" style="left:41.2px;top:724.9px;width:3.6px;height:3.6px;border-radius:50%;background:#002d63"></div>
<div class="t md" style="letter-spacing:0.31px;left:60.3px;top:754.9px;font-size:13px;color:#0050f0">List of Import</div>
<div class="abs" style="left:41.2px;top:759.4px;width:3.6px;height:3.6px;border-radius:50%;background:#0050f0"></div>
<div class="t md" style="letter-spacing:0.29px;left:60.3px;top:789.2px;font-size:13px;color:#002d63">List of Export</div>
<div class="abs" style="left:41.2px;top:793.8px;width:3.6px;height:3.6px;border-radius:50%;background:#002d63"></div>
<div class="t md" style="letter-spacing:-0.03px;left:60.3px;top:823.8px;font-size:13px;color:#002d63">Trade Dashboard</div>
<div class="abs" style="left:41.2px;top:828.3px;width:3.6px;height:3.6px;border-radius:50%;background:#002d63"></div>
<!--/SIDEBAR-->
<!--TOAST-->
<div class="abs" style="left:331.4px;top:78.4px;width:1029.4px;height:78.3px;background:#d4f3dc;border:1px solid #37b552;border-radius:10px;box-shadow:0 13px 24px -4px rgba(0,0,0,0.27)"></div>
<svg style="left:358.2px;top:103.3px" width="28" height="28" viewBox="0 0 28 28" fill="none" stroke="#22a83f" stroke-width="1.6" stroke-linecap="round" stroke-linejoin="round"><circle cx="14" cy="14" r="12.6"/><path d="M9.8 14.2 L12.8 17 L18.4 11.2" stroke-width="1.7"/></svg>
<div class="t" style="letter-spacing:-0.28px;left:405.5px;top:99.1px;font-size:15px;font-weight:700;color:#002d63">Submitted Successfully</div>
<div class="t md" style="letter-spacing:0.27px;left:405.5px;top:130.1px;font-size:15px;color:#5c7a9c">Application has been Submitted, your request has been sent pending processing to My Application.</div>
<div class="t" style="letter-spacing:-0.17px;left:1151.8px;top:98.5px;font-size:15px;font-weight:700;color:#0050f0">Go to My Application</div>
<div class="abs" style="left:1316.3px;top:97.4px;width:17.4px;height:17.4px;border-radius:50%;background:#002d63"></div>
<svg style="left:1321.6px;top:102.7px" width="6.8" height="6.8" viewBox="0 0 6.8 6.8" stroke="#fff" stroke-width="1.5" stroke-linecap="round"><path d="M1.3 1.3 L5.5 5.5 M5.5 1.3 L1.3 5.5"/></svg>
<!--/TOAST-->
  </div></div>
</div>
</body>
</html>
